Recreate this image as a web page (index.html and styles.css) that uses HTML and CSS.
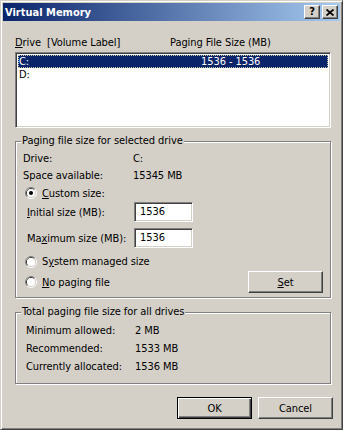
FILE: index.html
```html
<!DOCTYPE html>
<html>
<head>
<meta charset="utf-8">
<link rel="stylesheet" href="styles.css">
</head>
<body>
<div class="window">
  <div class="titlebar">
    <span class="title">Virtual Memory</span>
    <div class="tb-buttons">
      <span class="tb-btn help">?</span>
      <span class="tb-btn close"><svg width="8" height="7" viewBox="0 0 8 7"><path d="M0.5 0.5 L7.5 6.5 M7.5 0.5 L0.5 6.5" stroke="#000" stroke-width="1.7" fill="none"/></svg></span>
    </div>
  </div>
  <div class="content">
    <div class="list-head">
      <span class="col-drive"><u>D</u>rive&nbsp;&nbsp;[Volume Label]</span>
      <span class="col-size">Paging File Size (MB)</span>
    </div>
    <div class="listbox">
      <div class="row selected"><span class="c1">C:</span><span class="c2">1536 - 1536</span></div>
      <div class="row"><span class="c1">D:</span><span class="c2"></span></div>
    </div>

    <fieldset class="group g1">
      <legend>Paging file size for selected drive</legend>
      <div class="line h16"><span class="lbl">Drive:</span><span class="val">C:</span></div>
      <div class="line h18"><span class="lbl">Space available:</span><span class="val">15345 MB</span></div>
      <div class="line h18">
        <svg class="radio" width="12" height="12" viewBox="0 0 12 12"><path d="M2.11 9.89 A5.5 5.5 0 0 1 9.89 2.11" stroke="#808080" fill="none"/><path d="M9.89 2.11 A5.5 5.5 0 0 1 2.11 9.89" stroke="#fff" fill="none"/><path d="M2.82 9.18 A4.5 4.5 0 0 1 9.18 2.82" stroke="#404040" fill="none"/><path d="M9.18 2.82 A4.5 4.5 0 0 1 2.82 9.18" stroke="#d4d0c8" fill="none"/><circle cx="6" cy="6" r="4" fill="#fff"/><circle cx="6" cy="6" r="2" fill="#000"/></svg>
        <span class="rlabel"><u>C</u>ustom size:</span>
      </div>
      <div class="line h20">
        <span class="lbl ind"><u>I</u>nitial size (MB):</span>
        <span class="field">1536</span>
      </div>
      <div class="line h20 gap6">
        <span class="lbl ind">Ma<u>x</u>imum size (MB):</span>
        <span class="field">1536</span>
      </div>
      <div class="line h19 gap4">
        <svg class="radio" width="12" height="12" viewBox="0 0 12 12"><path d="M2.11 9.89 A5.5 5.5 0 0 1 9.89 2.11" stroke="#808080" fill="none"/><path d="M9.89 2.11 A5.5 5.5 0 0 1 2.11 9.89" stroke="#fff" fill="none"/><path d="M2.82 9.18 A4.5 4.5 0 0 1 9.18 2.82" stroke="#404040" fill="none"/><path d="M9.18 2.82 A4.5 4.5 0 0 1 2.82 9.18" stroke="#d4d0c8" fill="none"/><circle cx="6" cy="6" r="4" fill="#fff"/></svg>
        <span class="rlabel">S<u>y</u>stem managed size</span>
      </div>
      <div class="line h22">
        <svg class="radio" width="12" height="12" viewBox="0 0 12 12"><path d="M2.11 9.89 A5.5 5.5 0 0 1 9.89 2.11" stroke="#808080" fill="none"/><path d="M9.89 2.11 A5.5 5.5 0 0 1 2.11 9.89" stroke="#fff" fill="none"/><path d="M2.82 9.18 A4.5 4.5 0 0 1 9.18 2.82" stroke="#404040" fill="none"/><path d="M9.18 2.82 A4.5 4.5 0 0 1 2.82 9.18" stroke="#d4d0c8" fill="none"/><circle cx="6" cy="6" r="4" fill="#fff"/></svg>
        <span class="rlabel"><u>N</u>o paging file</span>
        <span class="btn set"><u>S</u>et</span>
      </div>
    </fieldset>

    <fieldset class="group g2">
      <legend>Total paging file size for all drives</legend>
      <div class="line h18"><span class="lbl t2">Minimum allowed:</span><span class="val">2 MB</span></div>
      <div class="line h18"><span class="lbl t2">Recommended:</span><span class="val">1533 MB</span></div>
      <div class="line h18"><span class="lbl t2">Currently allocated:</span><span class="val">1536 MB</span></div>
    </fieldset>

    <div class="actions">
      <span class="btn default">OK</span>
      <span class="btn">Cancel</span>
    </div>
  </div>
</div>
</body>
</html>
```

FILE: styles.css
```css
html, body {
  margin: 0;
  padding: 0;
  background: #d4d0c8;
}
body {
  font-family: "DejaVu Sans Condensed", "DejaVu Sans", sans-serif;
  font-stretch: condensed;
  font-size: 11px;
  letter-spacing: -0.08px;
  color: #000;
}
u { text-decoration: underline; text-underline-offset: 1px; }

.window {
  width: 343px;
  height: 430px;
  box-sizing: border-box;
  background: #d4d0c8;
  border: 1px solid;
  border-color: #d4d0c8 #404040 #404040 #d4d0c8;
  box-shadow: inset 1px 1px 0 #fff, inset -1px -1px 0 #808080;
  padding: 2px;
  display: flex;
  flex-direction: column;
  overflow: hidden;
}

.titlebar {
  height: 18px;
  display: flex;
  align-items: center;
  background: linear-gradient(to right, #0a246a, #a6caf0);
  color: #fff;
  padding-left: 2px;
}
.title {
  font-weight: bold;
  font-size: 11px;
  letter-spacing: 0;
  flex: 1;
}
.tb-buttons {
  display: flex;
  gap: 2px;
  margin-right: 2px;
}
.tb-btn {
  width: 16px;
  height: 14px;
  box-sizing: border-box;
  background: #d4d0c8;
  border: 1px solid;
  border-color: #fff #404040 #404040 #fff;
  box-shadow: inset -1px -1px 0 #808080;
  display: flex;
  align-items: center;
  justify-content: center;
  color: #000;
}
.tb-btn.help {
  font-family: "DejaVu Sans", sans-serif;
  font-weight: bold;
  font-size: 11px;
  line-height: 12px;
}

.content {
  flex: 1;
  display: flex;
  flex-direction: column;
  padding: 0 9px 0 12px;
}

.list-head {
  display: flex;
  height: 13px;
  line-height: 13px;
  margin-top: 15px;
}
.col-drive { width: 155px; }

.listbox {
  margin-top: 3px;
  height: 76px;
  box-sizing: border-box;
  background: #fff;
  border: 1px solid;
  border-color: #808080 #fff #fff #808080;
  box-shadow: inset 1px 1px 0 #404040, inset -1px -1px 0 #d4d0c8;
  padding: 2px 2px;
}
.row {
  display: flex;
  height: 13px;
  line-height: 13px;
}
.row .c1 { width: 182px; padding-left: 1px; }
.row.selected {
  background: #0a246a;
  color: #fff;
  outline: 1px dotted #c8c8b0;
  outline-offset: -1px;
}

.group {
  margin: 6px 0 0 0;
  padding: 2px 6px 4px 7px;
  border: 1px solid #808080;
  box-shadow: inset 1px 1px 0 #fff, 1px 1px 0 #fff;
  min-inline-size: 0;
}
.group legend {
  line-height: 14px;
  padding: 0 1px;
  margin-left: -2px;
  background: #d4d0c8;
}
.g2 {
  margin-top: 7px;
  padding-bottom: 8px;
}

.line {
  display: flex;
  align-items: center;
}
.h16 { height: 16px; }
.h18 { height: 18px; }
.h19 { height: 19px; }
.h20 { height: 20px; }
.h22 { height: 22px; }
.gap6 { margin-top: 6px; }
.gap4 { margin-top: 4px; }

.lbl { width: 110px; }
.lbl.ind { width: 107px; margin-left: 4px; }
.lbl.t2 { width: 109px; margin-left: 3px; }

.radio { margin-left: 2px; margin-right: 5px; flex: none; }

.field {
  width: 59px;
  height: 20px;
  box-sizing: border-box;
  background: #fff;
  border: 1px solid;
  border-color: #808080 #fff #fff #808080;
  box-shadow: inset 1px 1px 0 #404040, inset -1px -1px 0 #d4d0c8;
  padding-left: 5px;
  line-height: 18px;
}

.btn {
  width: 75px;
  height: 22px;
  box-sizing: border-box;
  background: #d4d0c8;
  border: 1px solid;
  border-color: #fff #404040 #404040 #fff;
  box-shadow: inset -1px -1px 0 #808080;
  display: flex;
  align-items: center;
  justify-content: center;
}
.btn.default {
  border-color: #000;
  box-shadow: inset 1px 1px 0 #fff, inset -1px -1px 0 #404040, inset -2px -2px 0 #808080;
}
.btn.set { margin-left: auto; margin-right: 1px; }

.actions {
  display: flex;
  justify-content: flex-end;
  gap: 6px;
  margin-top: 13px;
  margin-right: -2px;
}
```
